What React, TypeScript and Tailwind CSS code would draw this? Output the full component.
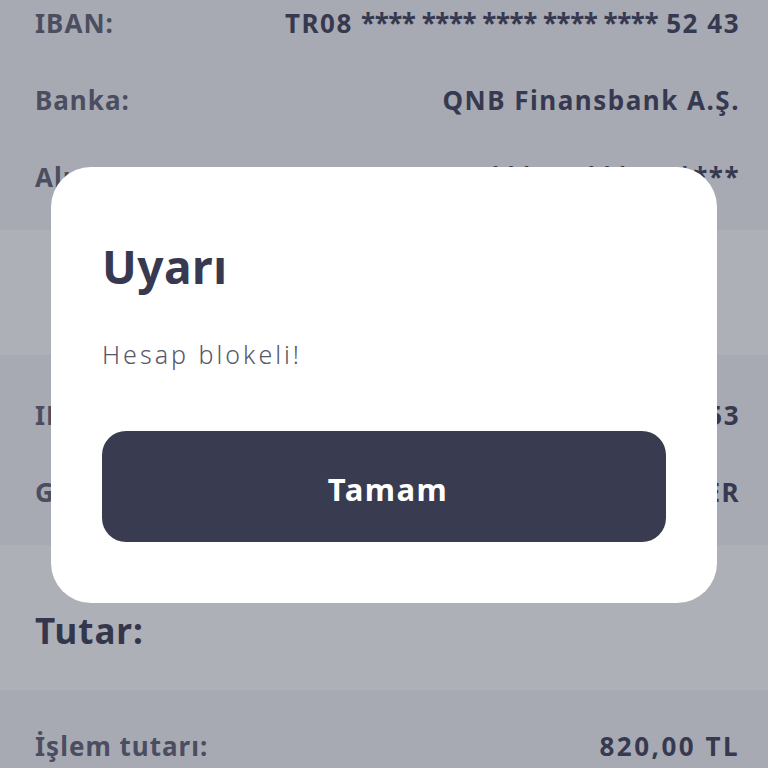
import React from "react";

const Row = ({ label, value }: { label: string; value: React.ReactNode }) => (
  <div className="flex h-[77px] items-center justify-between">
    <span className="text-[26px] font-bold tracking-[1px] text-[#4b4e60]">{label}</span>
    <span className="text-[26px] font-bold tracking-[1.5px] text-[#363950]">{value}</span>
  </div>
);

const Iban = ({ head, tail }: { head: string; tail: string }) => (
  <>
    {head} <span className="tracking-[-0.5px]">**** **** **** **** ****</span> {tail}
  </>
);

export default function App() {
  return (
    <div
      className="relative h-[768px] w-[768px] overflow-hidden bg-[#a8aab3]"
      style={{ fontFamily: "'Noto Sans', Lato, sans-serif" }}
    >
      <div className="-mt-[37px] flex flex-col">
        <div className="bg-[#a8aab3] pb-[14px] pl-[35px] pr-[28px] pt-[22px]">
          <Row label="IBAN:" value={<Iban head="TR08" tail="52 43" />} />
          <Row label="Banka:" value="QNB Finansbank A.Ş." />
          <Row label="Alıcı:" value="MEH*** AH*** AK****" />
        </div>
        <div className="h-[125px] bg-[#aeb0b8]" />
        <div className="bg-[#a8aab3] pb-[14px] pl-[35px] pr-[28px] pt-[22px]">
          <Row label="IBAN:" value={<Iban head="TR12" tail="41 53" />} />
          <Row label="Gönderen:" value="ALİ **** YILDIZ***ER" />
        </div>
        <div className="flex h-[145px] items-center bg-[#aeb0b8] px-[35px] pt-[28px]">
          <span className="text-[35px] font-bold tracking-[1px] text-[#34374c]">Tutar:</span>
        </div>
        <div className="bg-[#a8aab3] pb-[14px] pl-[35px] pr-[28px] pt-[18px]">
          <Row label="İşlem tutarı:" value={<span className="tracking-[2.5px]">820,00 TL</span>} />
        </div>
      </div>

      <div className="absolute left-[51px] top-[167px] flex h-[436px] w-[666px] flex-col rounded-[40px] bg-white px-[51px] pt-[72px]">
        <h2 className="text-[46px] font-bold leading-[1.2] tracking-[0.5px] text-[#363950]">Uyarı</h2>
        <p className="mt-[45px] text-[25px] font-light leading-[1.2] tracking-[3px] text-[#55586a]">Hesap blokeli!</p>
        <button className="mt-[62px] flex h-[111px] w-[564px] items-center justify-center rounded-[24px] bg-[#393b50] pl-[8px] pt-[5px] text-[31px] font-bold tracking-[1.5px] text-white">
          Tamam
        </button>
      </div>
    </div>
  );
}
